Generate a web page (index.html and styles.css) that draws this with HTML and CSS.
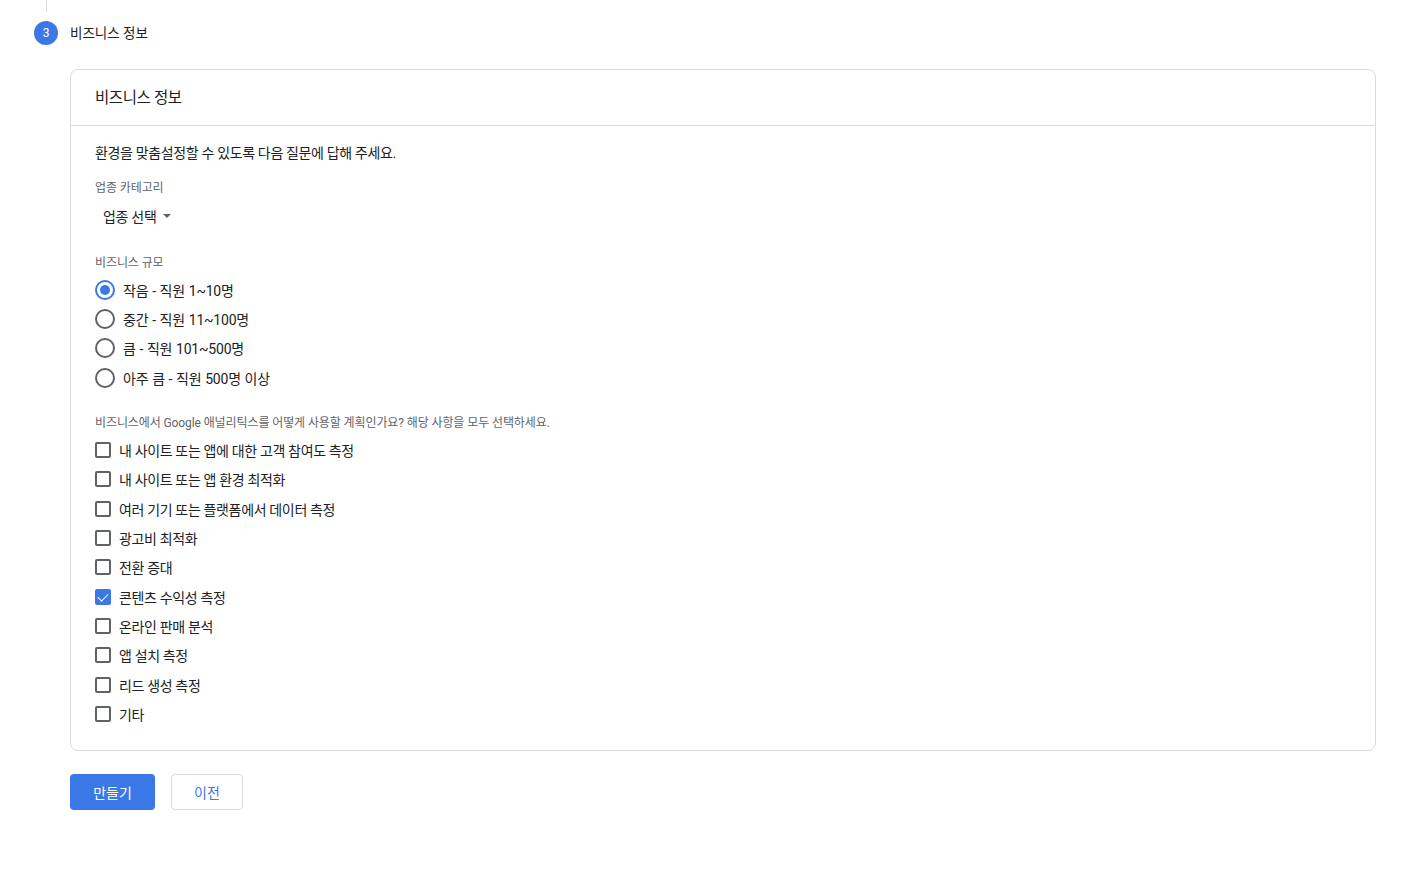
FILE: index.html
```html
<!DOCTYPE html>
<html lang="ko">
<head>
<meta charset="UTF-8">
<title>비즈니스 정보</title>
<link rel="stylesheet" href="styles.css">
</head>
<body>

<div class="step-line"></div>
<div class="step">
  <span class="step-num">3</span>
  <span class="step-title">비즈니스 정보</span>
</div>

<div class="card">
  <div class="card-head">비즈니스 정보</div>
  <div class="card-body">
    <p class="intro">환경을 맞춤설정할 수 있도록 다음 질문에 답해 주세요.</p>

    <div class="label">업종 카테고리</div>
    <button class="select">업종 선택 <span class="caret"></span></button>

    <div class="label label-size">비즈니스 규모</div>
    <div class="options radios">
      <label class="row"><input type="radio" name="size" class="radio" checked> 작음 - 직원 1~10명</label>
      <label class="row"><input type="radio" name="size" class="radio"> 중간 - 직원 11~100명</label>
      <label class="row"><input type="radio" name="size" class="radio"> 큼 - 직원 101~500명</label>
      <label class="row"><input type="radio" name="size" class="radio"> 아주 큼 - 직원 500명 이상</label>
    </div>

    <div class="label label-use">비즈니스에서 Google 애널리틱스를 어떻게 사용할 계획인가요? 해당 사항을 모두 선택하세요.</div>
    <div class="options checks">
      <label class="row"><input type="checkbox" class="check"> 내 사이트 또는 앱에 대한 고객 참여도 측정</label>
      <label class="row"><input type="checkbox" class="check"> 내 사이트 또는 앱 환경 최적화</label>
      <label class="row"><input type="checkbox" class="check"> 여러 기기 또는 플랫폼에서 데이터 측정</label>
      <label class="row"><input type="checkbox" class="check"> 광고비 최적화</label>
      <label class="row"><input type="checkbox" class="check"> 전환 증대</label>
      <label class="row"><input type="checkbox" class="check" checked> 콘텐츠 수익성 측정</label>
      <label class="row"><input type="checkbox" class="check"> 온라인 판매 분석</label>
      <label class="row"><input type="checkbox" class="check"> 앱 설치 측정</label>
      <label class="row"><input type="checkbox" class="check"> 리드 생성 측정</label>
      <label class="row"><input type="checkbox" class="check"> 기타</label>
    </div>
  </div>
</div>

<div class="actions">
  <button class="btn btn-primary">만들기</button>
  <button class="btn btn-plain">이전</button>
</div>

</body>
</html>
```

FILE: styles.css
```css
* {margin: 0; padding: 0; box-sizing: border-box;}
body {
  font-family: Roboto, "Noto Sans CJK KR", sans-serif;
  color: #202124;
  background: #fff;
}
.step-line {margin-left: 46px; width: 1px; height: 12px; background: #dadce0;}
.step {display: flex; align-items: center; gap: 12px; margin: 9px 0 0 34px; height: 24px;}
.step-num {
  width: 24px; height: 24px; border-radius: 50%; background: #3b78e7; color: #fff;
  font-size: 12px; display: flex; align-items: center; justify-content: center;
}
.step-title {font-size: 13.5px; color: #202124; padding-bottom: 2px;}

.card {
  margin: 24px 44px 0 70px; border: 1px solid #dadce0; border-radius: 8px;
}
.card-head {
  height: 56px; padding: 0 24px 3px; display: flex; align-items: center;
  font-size: 15.5px; letter-spacing: -0.4px; border-bottom: 1px solid #dadce0;
}
.card-body {padding: 17px 24px 21px; letter-spacing: -0.35px;}
.intro {font-size: 14px; line-height: 20px;}
.label {font-size: 12px; line-height: 16px; color: #5f6368; margin-top: 17px; letter-spacing: -0.1px;}
.select {
  display: flex; align-items: center; gap: 6px; height: 36px; margin-top: 2px; padding: 0 8px;
  border: none; background: none; font: inherit; font-size: 14px; letter-spacing: -0.3px; color: #202124; cursor: pointer;
}
.caret {width: 0; height: 0; border-left: 4px solid transparent; border-right: 4px solid transparent; border-top: 4px solid #5f6368;}
.label-size {margin-top: 21px;}
.label-use {margin-top: 23px;}
.options {margin-top: 4px;}
.radios {letter-spacing: -0.2px; word-spacing: 0.5px;}
.row {display: flex; align-items: center; gap: 8px; height: 29.33px; font-size: 14px; cursor: pointer;}

.radio {
  appearance: none; width: 20px; height: 20px; border: 2px solid #5f6368; border-radius: 50%;
  display: flex; align-items: center; justify-content: center; margin: 0;
}
.radio:checked {border-color: #3b78e7;}
.radio:checked::after {content: ""; width: 10px; height: 10px; border-radius: 50%; background: #3b78e7;}

.check {
  appearance: none; width: 16px; height: 16px; border: 2px solid #5f6368; border-radius: 2px;
  display: flex; align-items: center; justify-content: center; margin: 0;
}
.check:checked {background: #3b78e7; border-color: #3b78e7;}
.check:checked::after {
  content: ""; width: 9px; height: 5px; border-left: 1.8px solid #fff; border-bottom: 1.8px solid #fff;
  transform: translateY(-1px) rotate(-45deg);
}

.actions {display: flex; gap: 16px; margin: 23px 0 0 70px;}
.btn {height: 36px; border-radius: 4px; font: inherit; font-size: 14px; cursor: pointer;}
.btn-primary {width: 85px; background: #3b78e7; color: #fff; border: none;}
.btn-plain {width: 72px; background: #fff; color: #3b78e7; border: 1px solid #dadce0;}
```
